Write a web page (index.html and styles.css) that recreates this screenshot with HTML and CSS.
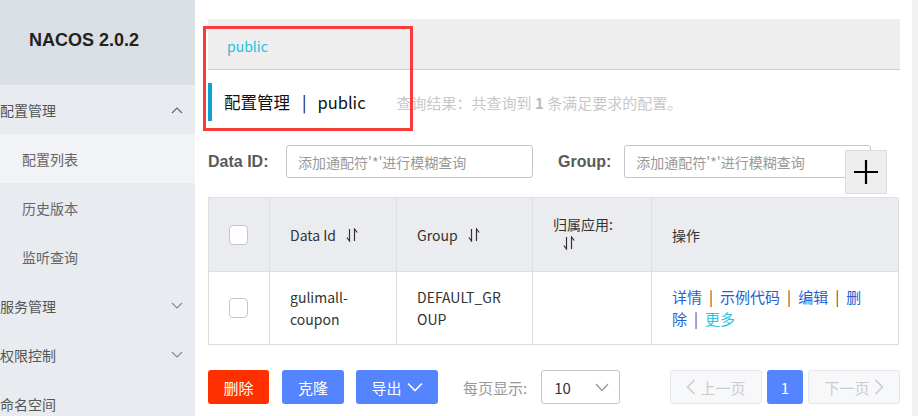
FILE: index.html
```html
<!DOCTYPE html>
<html lang="zh">
<head>
<meta charset="utf-8">
<title>NACOS</title>
<link rel="stylesheet" href="styles.css">
</head>
<body>
<aside class="sidebar">
  <div class="brand">NACOS 2.0.2</div>
  <ul class="menu">
    <li class="menu-item top"><span>配置管理</span>
      <svg class="chev" width="12" height="8" viewBox="0 0 12 8"><path d="M1 7 L6 2 L11 7" fill="none" stroke="#666" stroke-width="1.2"/></svg></li>
    <li class="menu-item sub active"><span>配置列表</span></li>
    <li class="menu-item sub"><span>历史版本</span></li>
    <li class="menu-item sub"><span>监听查询</span></li>
    <li class="menu-item top"><span>服务管理</span>
      <svg class="chev" width="12" height="8" viewBox="0 0 12 8"><path d="M1 1 L6 6 L11 1" fill="none" stroke="#888" stroke-width="1.1"/></svg></li>
    <li class="menu-item top"><span>权限控制</span>
      <svg class="chev" width="12" height="8" viewBox="0 0 12 8"><path d="M1 1 L6 6 L11 1" fill="none" stroke="#888" stroke-width="1.1"/></svg></li>
    <li class="menu-item top"><span>命名空间</span></li>
  </ul>
</aside>
<main class="main">
  <div class="annot"></div>
  <div class="crumb"><span class="crumb-link">public</span></div>
  <div class="title">
    <span class="title-bar"></span>
    <span class="title-text">配置管理<span class="sep">|</span>public</span>
    <span class="title-info">查询结果：共查询到 <b>1</b> 条满足要求的配置。</span>
  </div>
  <div class="search">
    <label class="search-label">Data ID:</label>
    <div class="input">添加通配符'*'进行模糊查询</div>
    <label class="search-label group-label">Group:</label>
    <div class="input">添加通配符'*'进行模糊查询</div>
    <button class="add-btn"><svg width="26" height="26" viewBox="0 0 26 26"><path d="M13 1 V25 M1 13 H25" stroke="#000" stroke-width="2.2"/></svg></button>
  </div>
  <div class="table">
    <div class="cell head c1"><span class="cb"></span></div>
    <div class="cell head c2">Data Id <svg class="sort" width="12" height="14" viewBox="0 0 12 14"><path d="M3.5 1 V13 L0.8 9.5 M8.5 13 V1 L11.2 4.5" fill="none" stroke="#333" stroke-width="1.2"/></svg></div>
    <div class="cell head c3">Group <svg class="sort" width="12" height="14" viewBox="0 0 12 14"><path d="M3.5 1 V13 L0.8 9.5 M8.5 13 V1 L11.2 4.5" fill="none" stroke="#333" stroke-width="1.2"/></svg></div>
    <div class="cell head c4"><div class="two">归属应用:<br><span class="sort-wrap"><svg class="sort" width="12" height="14" viewBox="0 0 12 14"><path d="M3.5 1 V13 L0.8 9.5 M8.5 13 V1 L11.2 4.5" fill="none" stroke="#333" stroke-width="1.2"/></svg></span></div></div>
    <div class="cell head c5">操作</div>
    <div class="cell c1"><span class="cb"></span></div>
    <div class="cell c2"><div class="wrap">gulimall-<br>coupon</div></div>
    <div class="cell c3"><div class="wrap">DEFAULT_GR<br>OUP</div></div>
    <div class="cell c4"></div>
    <div class="cell c5"><div class="wrap ops"><a>详情</a><i>|</i><a>示例代码</a><i>|</i><a>编辑</a><i>|</i><a>删<br>除</a><i>|</i><a class="more">更多</a></div></div>
  </div>
  <div class="footer">
    <button class="btn danger">删除</button>
    <button class="btn primary">克隆</button>
    <button class="btn primary export">导出 <svg width="16" height="10" viewBox="0 0 16 10"><path d="M1 1.5 L8 8.5 L15 1.5" fill="none" stroke="#fff" stroke-width="1.6"/></svg></button>
    <span class="page-size">每页显示:</span>
    <div class="select"><span>10</span><svg width="14" height="9" viewBox="0 0 14 9"><path d="M1 1 L7 7.5 L13 1" fill="none" stroke="#999" stroke-width="1.3"/></svg></div>
    <div class="pager">
      <button class="pg disabled"><svg width="10" height="16" viewBox="0 0 10 16"><path d="M8.5 1 L1.5 8 L8.5 15" fill="none" stroke="#ccc" stroke-width="1.6"/></svg> 上一页</button>
      <button class="pg current">1</button>
      <button class="pg disabled">下一页 <svg width="10" height="16" viewBox="0 0 10 16"><path d="M1.5 1 L8.5 8 L1.5 15" fill="none" stroke="#ccc" stroke-width="1.6"/></svg></button>
    </div>
  </div>
</main>
<div class="scroll-strip"></div>
</body>
</html>
```
FILE: styles.css
```css
* { box-sizing: border-box; }
html, body { margin: 0; padding: 0; }
body {
  display: flex;
  width: 918px;
  height: 416px;
  overflow: hidden;
  background: #fff;
  font-family: "Noto Sans CJK SC", "Noto Sans", sans-serif;
  font-size: 14px;
  color: #333;
}
.sidebar {
  width: 195px;
  flex: none;
  background: #e8ebf0;
}
.brand {
  height: 85px;
  background: #dadee5;
  padding-left: 29px;
  display: flex;
  align-items: center;
  font-family: "Liberation Sans", "Noto Sans", sans-serif;
  font-weight: bold;
  font-size: 18px;
  color: #222;
  padding-bottom: 4px;
}
.menu { list-style: none; margin: 0; padding: 0; }
.menu-item {
  height: 49px;
  display: flex;
  align-items: center;
  justify-content: space-between;
  padding-right: 12px;
  font-size: 14px;
}
.menu-item.top { padding-left: 0; color: #555; }
.menu-item.sub { padding-left: 22px; color: #666; }
.menu-item.active { background: #f1f3f6; }
.chev { flex: none; }

.main {
  flex: 1;
  position: relative;
  padding: 19px 12px 0 13px;
  min-width: 0;
}
.scroll-strip { width: 6px; flex: none; background: #f1f1f1; }
.annot {
  position: absolute;
  left: 8px;
  top: 26px;
  width: 210px;
  height: 105px;
  border: 3px solid #fb3a3a;
  z-index: 5;
}
.crumb {
  height: 51px;
  background: #eee;
  border-bottom: 1px solid #ccc;
  display: flex;
  align-items: center;
  padding-left: 19px;
  padding-top: 3px;
}
.crumb-link { color: #28bedc; font-size: 14px; }
.title {
  margin-top: 13px;
  height: 38px;
  display: flex;
  align-items: center;
}
.title-bar { width: 4px; height: 38px; background: #0e9fd5; flex: none; }
.title-text { margin-left: 12px; font-size: 16.5px; color: #111; }
.sep { margin: 0 11px 0 12px; }
.title-info { margin-left: 31px; font-size: 15px; color: #c8c8c8; }
.title-info b { color: #bbb; }

.search {
  position: relative;
  margin-top: 24px;
  display: flex;
  align-items: center;
  height: 33px;
}
.search-label {
  font-family: "Liberation Sans", sans-serif;
  font-weight: bold;
  font-size: 16px;
  color: #5a5a5a;
  width: 78px;
}
.group-label { width: auto; margin-left: 25px; margin-right: 13px; }
.input {
  width: 247px;
  height: 33px;
  border: 1px solid #c4c6cf;
  border-radius: 3px;
  display: flex;
  align-items: center;
  padding-left: 11px;
  color: #999;
  font-size: 14px;
}
.add-btn {
  position: absolute;
  left: 637px;
  top: 5px;
  width: 42px;
  height: 44px;
  background: #eee;
  border: 1px solid #ddd;
  padding: 0;
  display: flex;
  align-items: center;
  justify-content: center;
}

.table {
  margin-top: 19px;
  width: 690px;
  display: grid;
  grid-template-columns: 61px 127px 136px 119px 247px;
  grid-template-rows: 74px 73px;
  border-top: 1px solid #dcdee3;
  border-left: 1px solid #dcdee3;
}
.cell {
  border-right: 1px solid #dcdee3;
  border-bottom: 1px solid #dcdee3;
  display: flex;
  align-items: center;
  padding-left: 20px;
  font-size: 14px;
  color: #333;
  line-height: 22px;
}
.cell.head { background: #ebecf0; }
.cell.c1 { padding-left: 20px; }
.cb {
  width: 19px;
  height: 20px;
  border: 1px solid #c4c6cf;
  border-radius: 4px;
  background: #fff;
}
.sort { margin-left: 10px; }
.two { line-height: 20px; margin-top: -2px; }
.sort-wrap { display: inline-block; padding-left: 10px; }
.sort-wrap .sort { margin-left: 0; }
.wrap { line-height: 22px; }
.ops { font-size: 15px; }
.ops a { color: #1f5fd4; }
.ops i { font-style: normal; color: #7a4b2a; margin: 0 7px; }
.ops .more { color: #2cc4e6; }

.footer {
  margin-top: 25px;
  display: flex;
  align-items: center;
  height: 34px;
}
.btn {
  height: 34px;
  border: none;
  border-radius: 3px;
  color: #fff;
  font-family: "Noto Sans CJK SC", sans-serif;
  font-size: 15px;
  padding: 0;
  display: flex;
  align-items: center;
  justify-content: center;
  gap: 5px;
}
.danger { background: #ff3000; width: 61px; }
.primary { background: #5584ff; width: 62px; margin-left: 13px; }
.export { width: 82px; margin-left: 12px; }
.page-size { margin-left: 25px; color: #999; font-size: 15px; }
.select {
  margin-left: 14px;
  width: 79px;
  height: 34px;
  border: 1px solid #c4c6cf;
  border-radius: 3px;
  display: flex;
  align-items: center;
  justify-content: space-between;
  padding: 0 10px 0 12px;
  color: #333;
  font-size: 15px;
}
.pager { margin-left: auto; display: flex; gap: 5px; }
.pg {
  height: 34px;
  border-radius: 3px;
  font-family: "Noto Sans CJK SC", sans-serif;
  font-size: 15px;
  display: flex;
  align-items: center;
  justify-content: center;
  gap: 4px;
  padding: 0;
}
.pg.disabled { width: 92px; background: #f7f8fa; border: 1px solid #e6e7eb; color: #ccc; }
.pg.current { width: 36px; background: #5584ff; border: none; color: #fff; }
```
